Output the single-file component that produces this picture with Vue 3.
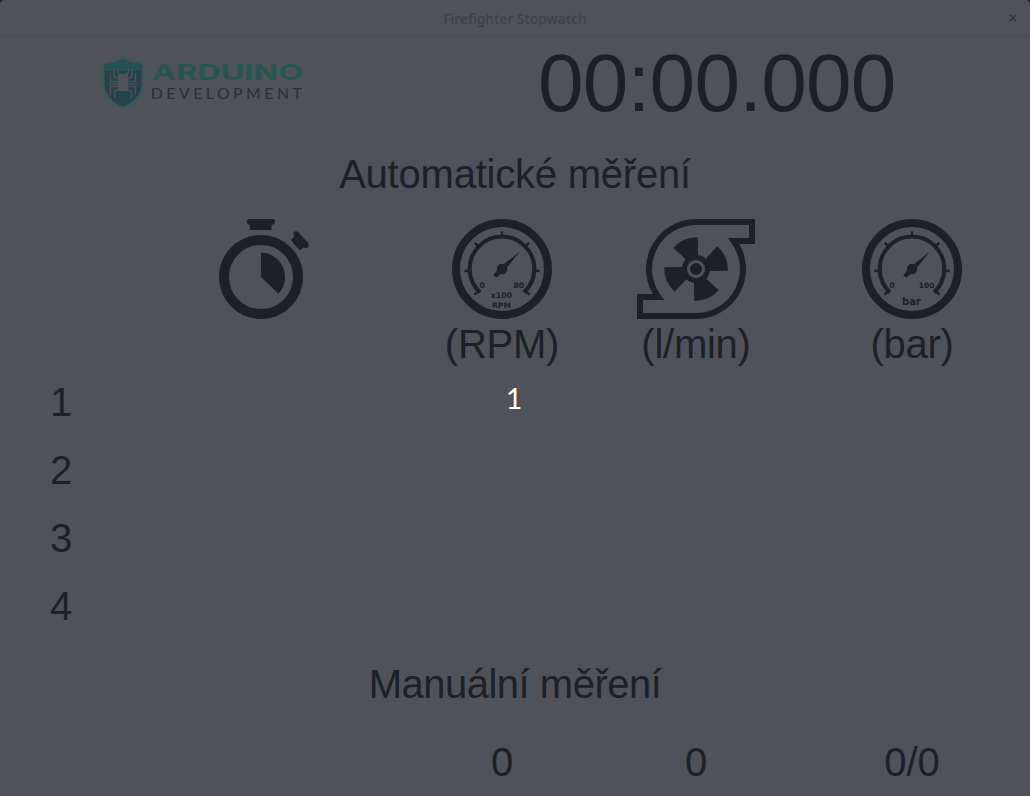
<script setup>
const laps = [1, 2, 3, 4]
const ticks = [-133, -93, -46, 0, 46, 93, 133]
const gauges = {
  rpm: { max: '80', maxX: 66.7, maxSize: 7.6, lines: [{ t: 'x100', y: 78.7, s: 7.8 }, { t: 'RPM', y: 88.6, s: 7.6 }] },
  bar: { max: '100', maxX: 64.7, maxSize: 7.5, lines: [{ t: 'bar', y: 86, s: 10 }] },
}
const columns = [
  { key: 'rpm', unit: '(RPM)', gauge: gauges.rpm, value: '0' },
  { key: 'flow', unit: '(l/min)', gauge: null, value: '0' },
  { key: 'bar', unit: '(bar)', gauge: gauges.bar, value: '0/0' },
]
</script>

<template>
  <div class="window">
    <header class="titlebar">
      <span class="title">Firefighter Stopwatch</span>
      <svg class="close" viewBox="0 0 8 8"><path d="M0.8 0.8 7.2 7.2M7.2 0.8 0.8 7.2" /></svg>
    </header>

    <section class="top">
      <svg class="logo" viewBox="102 55 202 56">
        <path class="shield-edge" d="M123 56.800C129 60.500 136 62 143.300 62V84C143.300 96 135 104.500 123 109.300C111 104.500 102.700 96 102.700 84V62C110 62 117 60.500 123 56.800Z" />
        <path class="shield" d="M123 59C129 62.200 135 63.800 141.500 64V84C141.500 94.800 134 102.500 123 107C112 102.500 104.500 94.800 104.500 84V64C111 63.800 117 62.200 123 59Z" />
        <path class="shield-top" d="M123 59C129 62.200 135 63.800 141.500 64V71H104.500V64C111 63.800 117 62.200 123 59Z" />
        <path class="chip" d="M118 74H128V91H118Z" />
        <path class="legs" d="M120 75L117.500 72V68M126 75L128.500 72V68M118 78.500L114 76.500V69M128 78.500L132 76.500V69M118 81.500H110.500V73M128 81.500H135.500V73M118 84H108.500M128 84H137.500M118 86.500H110.500V95M128 86.500H135.500V95M118 90L114.500 91.500V98.500M128 90L131.500 91.500V98.500" />
        <text class="brand" x="152" y="80" textLength="151" lengthAdjust="spacingAndGlyphs">ARDUINO</text>
        <text class="sub" x="150.800" y="99.200" textLength="151" lengthAdjust="spacing">DEVELOPMENT</text>
      </svg>
      <div class="clock">00:00.000</div>
    </section>

    <h1 class="heading">Automatické měření</h1>

    <section class="grid icons">
      <div></div>
      <div class="cell">
        <svg class="icon" viewBox="211 219 100 100">
          <circle class="line" cx="261" cy="277" r="37" stroke-width="10" />
          <path d="M261 277V252.500A24.500 24.500 0 0 1 278.500 293.700Z" />
          <path d="M249 219H273Q275.200 219.200 275.200 221.500Q275 224.500 271.500 225V230H249.800V225Q247 224.500 246.800 221.500Q247 219.200 249 219Z" />
          <path d="M294 232Q296.500 230.200 298.500 232.300L308.500 243.500Q309.500 246.500 307 248Q305.500 248.500 304 247.300L299.600 250.500L291 240.300L294.500 236.300Q292.500 233.800 294 232Z" />
        </svg>
      </div>
      <div v-for="c in columns" :key="c.key" class="cell">
        <svg v-if="c.gauge" class="icon" viewBox="0 0 100 100">
          <circle class="line" cx="50" cy="50" r="46" stroke-width="8" />
          <path class="line" d="M28 73.500A32.300 32.300 0 1 1 72 73.500" stroke-width="4" />
          <rect v-for="a in ticks" :key="a" x="48.800" y="12.300" width="2.400" height="5" :transform="`rotate(${a} 50 50)`" />
          <circle cx="50" cy="50" r="5.200" />
          <path d="M67.700 32.700L53 51L44.200 58.800L41.200 56.200L47 49Z" />
          <text class="dial" x="30.200" y="68.500" font-size="7.600">0</text>
          <text class="dial" :x="c.gauge.maxX" y="68.500" :font-size="c.gauge.maxSize">{{ c.gauge.max }}</text>
          <text v-for="l in c.gauge.lines" :key="l.t" class="dial" x="49.500" :y="l.y" :font-size="l.s">{{ l.t }}</text>
        </svg>
        <svg v-else class="icon wide" viewBox="0 0 118 100">
          <path class="line" stroke-width="6" d="M59 3H115V22H96.700A47 47 0 0 1 59 97H3V78H21.300A47 47 0 0 1 59 3Z" />
          <circle class="line" cx="59" cy="50" r="11.500" stroke-width="5" />
          <circle cx="59" cy="50" r="6" />
          <path v-for="a in [0, 90, 180, 270]" :key="a" d="M36.300 28.700A31.700 31.700 0 0 1 60.700 18.200L61 37L50 41.500Z" :transform="`rotate(${a} 59 50)`" />
        </svg>
        <span class="unit">{{ c.unit }}</span>
      </div>
    </section>

    <section class="laps">
      <div v-for="n in laps" :key="n" class="grid lap"><div class="num">{{ n }}</div></div>
    </section>

    <h1 class="heading manual">Manuální měření</h1>

    <section class="grid values">
      <div></div>
      <div></div>
      <div v-for="c in columns" :key="c.key" class="cell">{{ c.value }}</div>
    </section>

    <div class="overlay">1</div>
  </div>
</template>

<style>
body { background: #14302f; }
</style>

<style scoped>
.window {
  position: relative;
  width: 1030px;
  height: 796px;
  overflow: hidden;
  display: flex;
  flex-direction: column;
  border-radius: 5px 5px 0 0;
  background: #4f5259;
  color: #1d2026;
  font: 40px/46px "Liberation Sans", Arial, sans-serif;
}
.titlebar {
  height: 37px;
  flex: none;
  box-sizing: border-box;
  border-bottom: 1px solid #484b51;
  display: grid;
  grid-template-columns: 1fr auto 1fr;
  align-items: center;
}
.title {
  grid-column: 2;
  padding-top: 2px;
  font: 600 13.6px/20px "Noto Sans", sans-serif;
  color: #3f4347;
}
.close {
  width: 8px;
  height: 8px;
  justify-self: end;
  margin-right: 13px;
  fill: none;
  stroke: #303338;
  stroke-width: 1.5;
}
.top {
  height: 110px;
  flex: none;
  display: flex;
  align-items: flex-start;
}
.logo { width: 202px; height: 56px; margin: 18px 0 0 102px; }
.shield-edge { fill: none; stroke: #285f5d; stroke-width: 1.4; stroke-dasharray: 1.5 0.7; }
.shield { fill: #25434a; }
.shield-top { fill: #245152; }
.chip { fill: #505359; }
.legs { fill: none; stroke: #4c5157; stroke-width: 1.4; }
.brand { font: bold 20.8px Inter, sans-serif; fill: #255553; }
.sub { font: 15.8px Lato, sans-serif; fill: #2a3034; }
.clock {
  margin-left: 234px;
  font-size: 82px;
  letter-spacing: -0.8px;
  line-height: 92px;
}
.heading {
  margin: 4px 0 0;
  font-size: 40px;
  font-weight: 400;
  line-height: 46px;
  letter-spacing: -0.22px;
  text-align: center;
}
.grid {
  display: grid;
  grid-template-columns: 120px 282px 200px 188px 240px;
}
.cell {
  display: flex;
  flex-direction: column;
  align-items: center;
}
.cell:last-child { padding-left: 4px; }
.icons { margin-top: 22px; height: 150px; flex: none; }
.icon { width: 100px; height: 100px; flex: none; fill: #1d2026; }
.wide { width: 118px; }
.line { fill: none; stroke: #1d2026; }
.dial { font-family: "DejaVu Sans", sans-serif; font-weight: bold; text-anchor: middle; }
.unit { margin-top: 2px; letter-spacing: -0.25px; }
.laps { margin-top: 10px; }
.lap { height: 68px; }
.num { text-align: center; padding-left: 2px; }
.manual { margin-top: 10px; letter-spacing: -0.5px; }
.values { margin-top: 32px; }
.overlay {
  position: absolute;
  left: 0;
  right: 2px;
  top: 380px;
  text-align: center;
  font: 28px/36px Lato, sans-serif;
  color: #fff;
}
</style>
